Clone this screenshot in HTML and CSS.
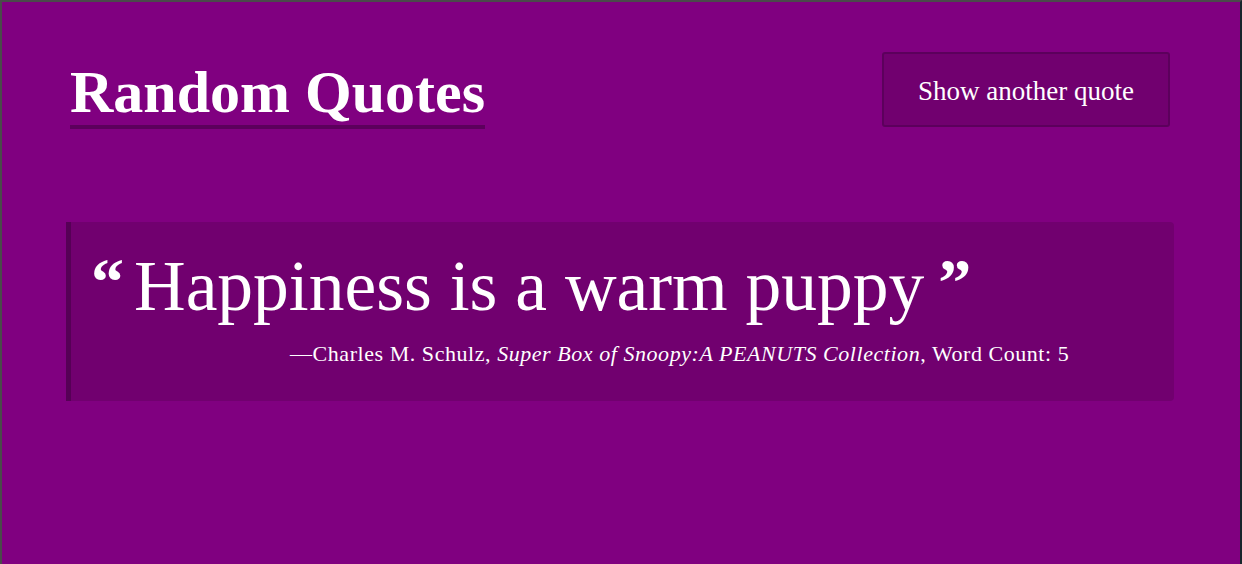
FILE: index.html
```html
<!DOCTYPE html>
<html lang="en">
<head>
<meta charset="utf-8">
<title>Random Quotes</title>
<link rel="stylesheet" href="styles.css">
</head>
<body>
<div class="page">
  <header class="header">
    <h1 class="title">Random Quotes</h1>
    <button class="btn" type="button">Show another quote</button>
  </header>
  <blockquote class="quote">
    <p class="quote-text"><span class="mark mark-open">“</span>Happiness is a warm puppy<span class="mark mark-close">”</span></p>
    <p class="cite">—Charles M. Schulz, <em>Super Box of Snoopy:A PEANUTS Collection</em>, Word Count: 5</p>
  </blockquote>
</div>
</body>
</html>
```

FILE: styles.css
```css
html, body {
  margin: 0;
  padding: 0;
  height: 100%;
}
body {
  background: #800080;
  font-family: "Liberation Serif", "Times New Roman", serif;
  color: #fff;
}
.page {
  box-sizing: border-box;
  height: 564px;
  border-top: 2px solid #4a4a4a;
  border-left: 2px solid #4a4a4a;
  border-right: 2px solid #18262c;
  padding: 0 66px 0 64px;
}
.header {
  display: flex;
  justify-content: space-between;
  align-items: flex-start;
  padding: 50px 4px 0 4px;
}
.title {
  margin: 7px 0 0 0;
  font-size: 60px;
  font-weight: 700;
  line-height: 66px;
  padding: 0;
  border-bottom: 4px solid #5c005c;
}
.btn {
  box-sizing: border-box;
  width: 288px;
  height: 75px;
  padding: 3px 0 0 0;
  background: #71006f;
  border: 2px solid #5c005c;
  border-radius: 3px;
  color: #fff;
  font-family: inherit;
  font-size: 27px;
  cursor: pointer;
}
.quote {
  margin: 93px 0 0 0;
  background: #71006f;
  border-left: 5px solid #560056;
  border-radius: 0 4px 4px 0;
  padding: 25px 20px 33px 20px;
}
.quote-text {
  margin: 0;
  font-size: 71.5px;
  line-height: 78px;
}
.mark {
  font-weight: 700;
  font-size: 66px;
  line-height: 0;
  vertical-align: 6px;
}
.mark-open {
  margin-right: 10px;
}
.mark-close {
  margin-left: 14px;
}
.cite {
  margin: 15px 0 0 0;
  padding-left: 199px;
  font-size: 22px;
  line-height: 28px;
  letter-spacing: 0.55px;
}
.cite em {
  font-style: italic;
}
```
